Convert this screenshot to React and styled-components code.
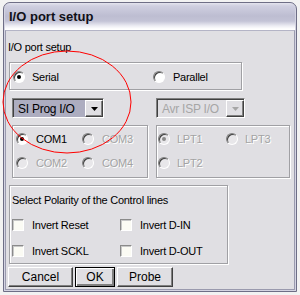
import styled, { createGlobalStyle } from 'styled-components';

const GlobalStyle = createGlobalStyle`
  html, body {
    margin: 0;
    padding: 0;
    background: #f2f2f2;
  }
  body {
    font-family: 'Liberation Sans', Arial, sans-serif;
    font-size: 11px;
    letter-spacing: -0.25px;
    color: #000;
  }
`;

const Screen = styled.div`
  position: relative;
  width: 300px;
  height: 295px;
  padding: 2px 0 0 3px;
  box-sizing: border-box;
  overflow: hidden;
`;

const Window = styled.div`
  width: 294px;
  height: 290px;
  box-sizing: border-box;
  display: flex;
  flex-direction: column;
  border: 1px solid #6e6e86;
  border-radius: 7px 7px 0 0;
  padding: 0 1px 1px 1px;
  background: #d4d4e2;
`;

const TitleBar = styled.div`
  height: 27px;
  flex: none;
  display: flex;
  align-items: center;
  padding-left: 4px;
  border-radius: 6px 6px 0 0;
  background: linear-gradient(
    to bottom,
    #e4e4ee 0px,
    #cfcfe0 3px,
    #bdbdd1 13px,
    #c3c3d6 18px,
    #ededf4 23px,
    #ffffff 26px
  );
  font-weight: bold;
  font-size: 13px;
  letter-spacing: 0;
  color: #101018;
`;

const Client = styled.div`
  flex: 1;
  display: flex;
  flex-direction: column;
  background: #e0dfe3;
  border: 1px solid #9a9aae;
  border-top-color: #b4b4c6;
`;

const Caption = styled.div`
  line-height: 13px;
  margin: 10px 0 0 2px;
`;

const Group = styled.div`
  box-sizing: border-box;
  border: 1px solid #a0a0a4;
  box-shadow: 1px 1px 0 #fff, inset 1px 1px 0 #fff;
  width: ${(p) => p.w}px;
  height: ${(p) => p.h}px;
`;

const ModeGroup = styled(Group)`
  margin: 8px 0 0 3px;
  display: grid;
  grid-template-columns: 140px 1fr;
  align-items: start;
  padding: 8px 0 0 3px;
`;

const TwoCols = styled.div`
  display: grid;
  grid-template-columns: 144px 1fr;
  padding-left: 6px;
  margin-top: ${(p) => p.mt}px;
`;

const Combo = styled.div`
  box-sizing: border-box;
  width: ${(p) => p.w}px;
  height: 20px;
  display: flex;
  align-items: stretch;
  border: 1px solid;
  border-color: #808080 #fff #fff #808080;
  box-shadow: inset 1px 1px 0 #404040;
  padding: 1px 0 0 1px;
  background: ${(p) => (p.disabled ? '#e0dfe3' : '#adadc0')};
`;

const ComboText = styled.div`
  flex: 1;
  display: flex;
  align-items: center;
  padding-left: 4px;
  font-size: 12px;
  color: ${(p) => (p.disabled ? '#a6a6a6' : '#000')};
`;

const ArrowButton = styled.div`
  width: 16px;
  display: flex;
  align-items: center;
  justify-content: center;
  background: #e0dfe3;
  border: 1px solid;
  border-color: #fff #404040 #404040 #fff;
  box-shadow: inset -1px -1px 0 #808080;
`;

const PortGroup = styled(Group)`
  display: grid;
  grid-template-columns: ${(p) => p.col}px 1fr;
  row-gap: 12px;
  align-content: start;
  padding: 7px 0 0 ${(p) => p.pl}px;
`;

const Option = styled.label`
  display: flex;
  align-items: center;
  gap: ${(p) => p.gap || 7}px;
  height: 12px;
  white-space: nowrap;
  color: ${(p) => (p.disabled ? '#a3a3a3' : '#000')};
  text-shadow: ${(p) => (p.disabled ? '1px 1px 0 #fff' : 'none')};
`;

const RadioMark = styled.span`
  position: relative;
  width: 12px;
  height: 12px;
  flex: none;
  box-sizing: border-box;
  border-radius: 50%;
  border: 1px solid;
  border-color: #808080 #fff #fff #808080;
  box-shadow: inset 1px 1px 0 #404040;
  background: ${(p) => (p.disabled ? '#e8e7ea' : '#fff')};

  &::after {
    content: '';
    display: ${(p) => (p.checked ? 'block' : 'none')};
    position: absolute;
    left: 3px;
    top: 3px;
    width: 4px;
    height: 4px;
    border-radius: 50%;
    background: ${(p) => (p.disabled ? '#8a8a8a' : '#000')};
  }
`;

const CheckMark = styled.span`
  width: 12px;
  height: 12px;
  flex: none;
  box-sizing: border-box;
  border: 1px solid;
  border-color: #8a8a8a #fff #fff #8a8a8a;
  box-shadow: inset 1px 1px 0 #c8c8c8;
  background: #fbfbf4;
`;

const PolarityGroup = styled(Group)`
  margin: 7px 0 0 3px;
  padding: 8px 0 0 2px;
  display: flex;
  flex-direction: column;
`;

const PolarityGrid = styled.div`
  display: grid;
  grid-template-columns: 108px 1fr;
  row-gap: 14px;
  margin-top: 12px;
`;

const ButtonRow = styled.div`
  display: flex;
  gap: 2px;
  margin: 3px 0 0 2px;
`;

const Button = styled.button`
  box-sizing: border-box;
  width: ${(p) => p.w}px;
  height: 20px;
  padding: 0;
  font: inherit;
  font-size: 12px;
  color: #000;
  background: #e0dfe3;
  border: 1px solid;
  border-color: ${(p) =>
    p.primary ? '#000' : '#fff #404040 #404040 #fff'};
  box-shadow: ${(p) =>
    p.primary
      ? 'inset 1px 1px 0 #fff, inset -2px -2px 0 #808080'
      : 'inset -1px -1px 0 #808080'};
`;

const Annotation = styled.svg`
  position: absolute;
  left: 0;
  top: 0;
  pointer-events: none;
`;

function Radio({ label, checked, disabled, gap }) {
  return (
    <Option disabled={disabled} gap={gap}>
      <RadioMark checked={checked} disabled={disabled} />
      {label}
    </Option>
  );
}

function Check({ label }) {
  return (
    <Option gap={8}>
      <CheckMark />
      {label}
    </Option>
  );
}

function Dropdown({ w, value, disabled }) {
  return (
    <Combo w={w} disabled={disabled}>
      <ComboText disabled={disabled}>{value}</ComboText>
      <ArrowButton>
        <svg width="7" height="4" viewBox="0 0 7 4">
          <polygon points="0,0 7,0 3.5,4" fill={disabled ? '#a6a6a6' : '#000'} />
        </svg>
      </ArrowButton>
    </Combo>
  );
}

export default function App() {
  return (
    <>
      <GlobalStyle />
      <Screen>
        <Window>
          <TitleBar>I/O port setup</TitleBar>
          <Client>
            <Caption>I/O port setup</Caption>
            <ModeGroup w={233} h={28}>
              <Radio label="Serial" checked />
              <Radio label="Parallel" gap={8} />
            </ModeGroup>
            <TwoCols mt={8}>
              <Dropdown w={92} value="SI Prog I/O" />
              <Dropdown w={89} value="Avr ISP I/O" disabled />
            </TwoCols>
            <TwoCols mt={7}>
              <PortGroup w={136} h={53} col={66} pl={3}>
                <Radio label="COM1" checked gap={8} />
                <Radio label="COM3" disabled gap={8} />
                <Radio label="COM2" disabled gap={8} />
                <Radio label="COM4" disabled gap={8} />
              </PortGroup>
              <PortGroup w={134} h={53} col={68} pl={1}>
                <Radio label="LPT1" checked disabled />
                <Radio label="LPT3" disabled />
                <Radio label="LPT2" disabled />
              </PortGroup>
            </TwoCols>
            <PolarityGroup w={219} h={79}>
              <Caption as="div" style={{ margin: 0 }}>
                Select Polarity of the Control lines
              </Caption>
              <PolarityGrid>
                <Check label="Invert Reset" />
                <Check label="Invert D-IN" />
                <Check label="Invert SCKL" />
                <Check label="Invert D-OUT" />
              </PolarityGrid>
            </PolarityGroup>
            <ButtonRow>
              <Button w={65}>Cancel</Button>
              <Button w={40} primary>
                OK
              </Button>
              <Button w={56}>Probe</Button>
            </ButtonRow>
          </Client>
        </Window>
        <Annotation width="300" height="295">
          <ellipse cx="67" cy="102" rx="64" ry="51" fill="none" stroke="#ff0000" strokeWidth="1" />
        </Annotation>
      </Screen>
    </>
  );
}
